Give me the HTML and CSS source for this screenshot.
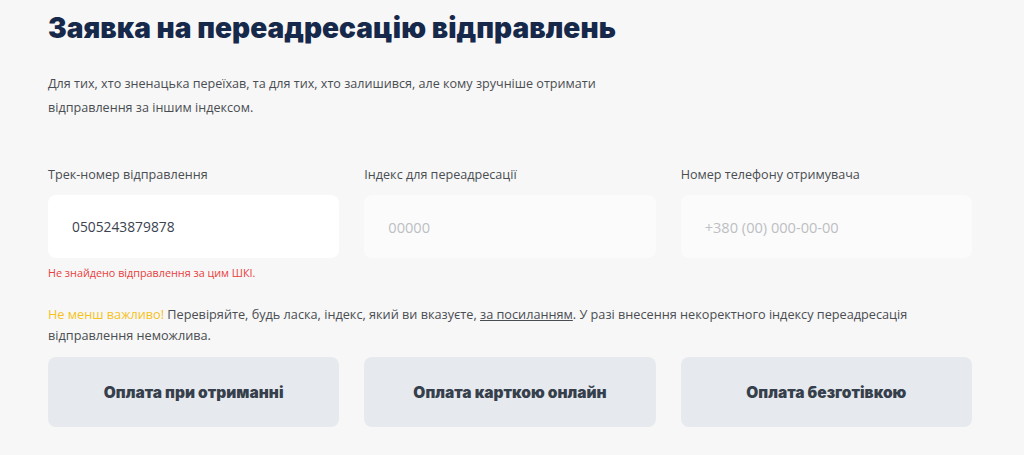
FILE: index.html
```html
<!DOCTYPE html>
<html lang="uk">
<head>
    <meta charset="UTF-8">
    <meta name="viewport" content="width=device-width, initial-scale=1.0">
    <title>Заявка на переадресацію відправлень</title>
    <link rel="stylesheet" href="styles.css">
</head>
<body>
    <div class="page">
        <h1 class="title">Заявка на переадресацію відправлень</h1>

        <p class="lead">Для тих, хто зненацька переїхав, та для тих, хто залишився, але кому зручніше отримати<br>відправлення за іншим індексом.</p>

        <div class="fields">
            <div class="field">
                <label class="label">Трек-номер відправлення</label>
                <div class="input filled">0505243879878</div>
                <div class="error">Не знайдено відправлення за цим ШКІ.</div>
            </div>
            <div class="field">
                <label class="label">Індекс для переадресації</label>
                <div class="input empty">00000</div>
            </div>
            <div class="field">
                <label class="label">Номер телефону отримувача</label>
                <div class="input empty">+380 (00) 000-00-00</div>
            </div>
        </div>

        <p class="notice"><span class="warn">Не менш важливо!</span> Перевіряйте, будь ласка, індекс, який ви вказуєте, <a href="#">за посиланням</a>. У разі внесення некоректного індексу переадресація відправлення неможлива.</p>

        <div class="payments">
            <button class="pay">Оплата при отриманні</button>
            <button class="pay">Оплата карткою онлайн</button>
            <button class="pay">Оплата безготівкою</button>
        </div>
    </div>
</body>
</html>
```

FILE: styles.css
```css
body {
    margin: 0;
    background-color: #f7f7f7;
    font-family: "Open Sans", "Noto Sans", sans-serif;
}
.page {
    width: 924px;
    padding: 10px 0 0 48px;
}
.title {
    margin: 0;
    font-family: Inter, sans-serif;
    font-weight: 900;
    font-size: 28px;
    line-height: 36px;
    color: #17294a;
    letter-spacing: 0.05px;
}
.lead {
    margin: 26px 0 0;
    font-size: 12.6px;
    line-height: 24px;
    color: #4a4d52;
}
.fields {
    display: grid;
    grid-template-columns: repeat(3, 1fr);
    column-gap: 25px;
    margin-top: 46px;
}
.label {
    display: block;
    font-size: 12.6px;
    line-height: 18px;
    color: #4a4d52;
}
.input {
    margin-top: 11px;
    height: 63px;
    border-radius: 8px;
    background-color: #fff;
    padding: 0 24px;
    display: flex;
    align-items: center;
}
.input.filled {
    font-size: 13.8px;
    color: #3b4250;
}
.input.empty {
    font-size: 14.6px;
    background-color: #fbfbfb;
    color: #bcbfc3;
}
.error {
    margin-top: 8px;
    font-size: 10.8px;
    line-height: 14px;
    color: #e8413d;
}
.notice {
    margin: 24px 0 0;
    font-size: 12.7px;
    line-height: 21px;
    color: #4a4d52;
}
.warn {
    color: #f5c21b;
}
.notice a {
    color: #4a4d52;
}
.payments {
    display: grid;
    grid-template-columns: repeat(3, 1fr);
    column-gap: 25px;
    margin-top: 11px;
}
.pay {
    height: 70px;
    border: none;
    border-radius: 8px;
    background-color: #e6e9ed;
    font-family: Inter, sans-serif;
    font-weight: 900;
    font-size: 15.5px;
    color: #363f4c;
}
```
